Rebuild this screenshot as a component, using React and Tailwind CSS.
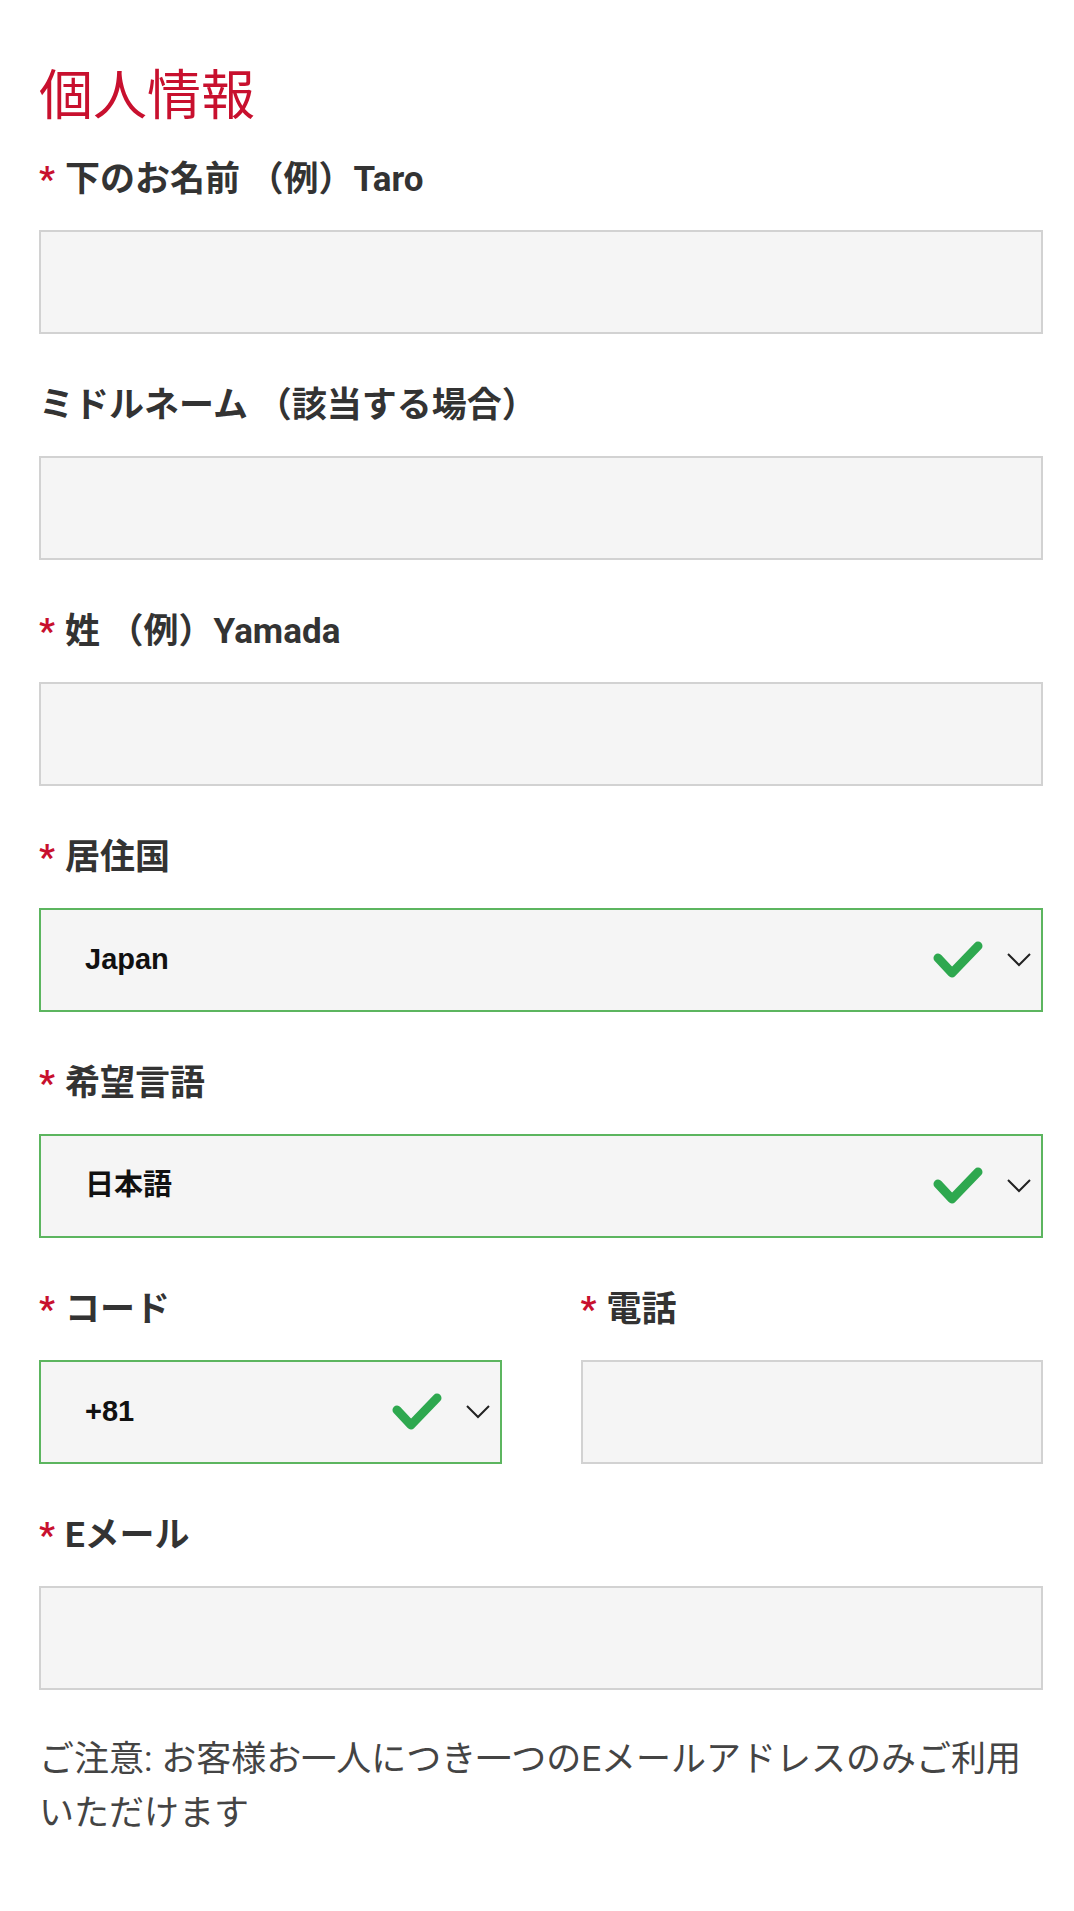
import React from 'react';

const FONT = { fontFamily: 'Roboto, "Noto Sans CJK JP", sans-serif' };
const SELECT_FONT = { fontFamily: '"Liberation Sans", "Noto Sans CJK JP", sans-serif' };

function Label({ text, required }) {
  return (
    <div className="pt-[3px] h-[55px] leading-[52px] text-[35px] font-bold text-[#333] whitespace-nowrap">
      {required && <span className="text-[#c8102e] mr-[10px]">*</span>}
      {text}
    </div>
  );
}

function TextBox() {
  return <div className="h-[104px] w-full border-2 border-[#d2d2d2] bg-[#f5f5f5]" />;
}

function Check() {
  return (
    <svg width="50" height="40" viewBox="0 0 50 40" fill="none">
      <path
        d="M5 18 L19 33 L45 6"
        stroke="#2ea84f"
        strokeWidth="9"
        strokeLinecap="round"
        strokeLinejoin="round"
      />
    </svg>
  );
}

function Chevron() {
  return (
    <svg width="24" height="14" viewBox="0 0 24 14" fill="none">
      <path d="M1 1 L12 12 L23 1" stroke="#222" strokeWidth="2" />
    </svg>
  );
}

function SelectBox({ value }) {
  return (
    <div className="h-[104px] w-full border-2 border-[#5cb55f] bg-[#f5f5f5] flex items-center pl-[44px] pr-[10px]">
      <span className="flex-1 text-[29px] font-bold text-[#111]" style={SELECT_FONT}>
        {value}
      </span>
      <div className="mr-[24px] flex items-center">
        <Check />
      </div>
      <Chevron />
    </div>
  );
}

function Field({ label, required, children, className = '' }) {
  return (
    <div className={className}>
      <Label text={label} required={required} />
      <div className="mt-[24px]">{children}</div>
    </div>
  );
}

export default function App() {
  return (
    <div className="min-h-[1911px] bg-white pt-[70px] pl-[39px] pr-[31px]" style={FONT}>
      <div className="w-[1004px]">
        <h1 className="text-[54px] leading-none font-normal text-[#c8102e] h-[54px]">個人情報</h1>

        <div className="mt-[27px] flex flex-col gap-[43px]">
          <Field label="下のお名前 （例）Taro" required>
            <TextBox />
          </Field>
          <Field label="ミドルネーム （該当する場合）">
            <TextBox />
          </Field>
          <Field label="姓 （例）Yamada" required>
            <TextBox />
          </Field>
          <Field label="居住国" required>
            <SelectBox value="Japan" />
          </Field>
          <Field label="希望言語" required>
            <SelectBox value="日本語" />
          </Field>
          <div className="grid grid-cols-2 gap-[79px]">
            <Field label="コード" required>
              <SelectBox value="+81" />
            </Field>
            <Field label="電話" required>
              <TextBox />
            </Field>
          </div>
          <Field label="Eメール" required>
            <TextBox />
          </Field>
          <p className="text-[35px] leading-[54px] text-[#444] font-normal">
            ご注意: お客様お一人につき一つのEメールアドレスのみご利用いただけます
          </p>
        </div>
      </div>
    </div>
  );
}
